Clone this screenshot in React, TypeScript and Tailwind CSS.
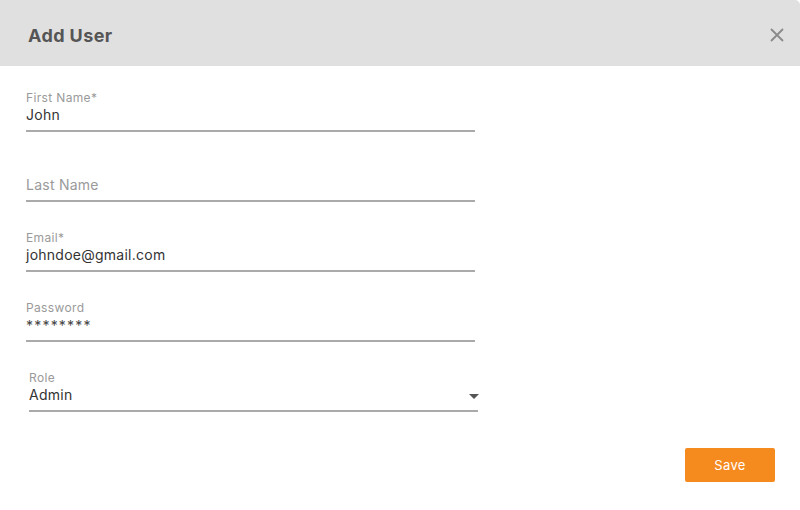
import React from "react";

function Field({ label, value, placeholder, valueClass = "" }: { label?: string; value?: string; placeholder?: string; valueClass?: string }) {
  return (
    <div className="w-[449px] border-b-2 border-[#aaaaaa] pb-[5px]">
      <div className="h-[14px] text-[12px] leading-[14px] text-[#9a9a9a] tracking-[0.35px]">{label}</div>
      <div className={`h-[20px] text-[14px] leading-[20px] tracking-[0.25px] ${placeholder ? "text-[#9a9a9a]" : "text-[#333333]"} ${valueClass}`}>
        {value ?? placeholder}
      </div>
    </div>
  );
}

export default function App() {
  return (
    <div className="w-[800px] h-[510px] bg-white overflow-hidden" style={{ fontFamily: "Inter, 'Open Sans', sans-serif" }}>
      <div className="h-[66px] bg-[#e0e0e0] rounded-tr-[5px] flex items-center justify-between pl-[28px] pr-[15px]">
        <h1 className="text-[18px] font-bold text-[#555555] leading-none mt-[5px] tracking-[0.4px]">Add User</h1>
        <svg width="16" height="16" viewBox="0 0 16 16" className="mt-[3px]">
          <path d="M2 2 L14 14 M14 2 L2 14" stroke="#8a8a8a" strokeWidth="1.8" />
        </svg>
      </div>
      <div className="pl-[26px] pt-[25px] flex flex-col gap-[29px]">
        <Field label="First Name*" value="John" />
        <Field placeholder="Last Name" />
        <Field label="Email*" value="johndoe@gmail.com" />
        <Field label="Password" value="********" valueClass="tracking-[1.2px] pt-[1px] text-[#444444]" />
        <div className="ml-[3px] w-[449px] border-b-2 border-[#aaaaaa] pb-[5px]">
          <div className="h-[14px] text-[12px] leading-[14px] text-[#9a9a9a] tracking-[0.35px]">Role</div>
          <div className="h-[20px] flex items-center justify-between text-[14px] leading-[20px] text-[#333333] tracking-[0.25px]">
            <span>Admin</span>
            <svg width="10" height="5" viewBox="0 0 10 5" className="mr-[-1px] mt-[3px]">
              <path d="M0 0 L10 0 L5 5 Z" fill="#555555" />
            </svg>
          </div>
        </div>
      </div>
      <div className="flex justify-end pr-[25px] mt-[36px]">
        <button className="w-[90px] h-[34px] bg-[#f58a1f] rounded-[2px] text-white text-[13px] pt-[1px] tracking-[0.3px]">Save</button>
      </div>
    </div>
  );
}
